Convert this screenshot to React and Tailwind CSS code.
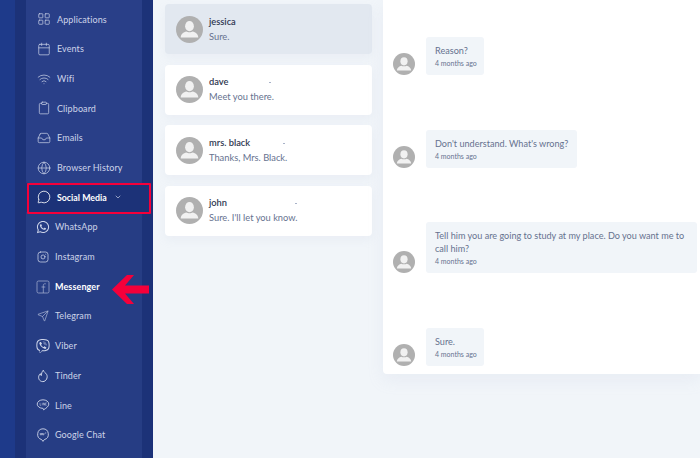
import { LayoutGrid, Calendar, Wifi, Clipboard, Inbox, Globe, MessageCircle, ChevronDown, Instagram, Send } from 'lucide-react';
import { FaWhatsapp, FaViber } from 'react-icons/fa';

function FbSquare() {
  return (
    <svg width="14" height="14" viewBox="0 0 14 14" fill="none" stroke="currentColor" strokeWidth="0.8" opacity="0.7">
      <rect x="1" y="1" width="12" height="12" rx="1.500" />
      <path d="M9.800 3.800h-1c-1 0-1.500.6-1.500 1.500V13M5.500 7h3.800" />
    </svg>
  );
}

function LineIcon() {
  return (
    <svg width="14" height="14" viewBox="0 0 14 14" fill="none" stroke="currentColor" strokeWidth="0.9">
      <path d="M7 1.800c3.200 0 5.800 1.900 5.800 4.300 0 2.300-2.900 4.400-5.300 5.700.2-.7.1-1.300-.5-1.400-3.200-.1-5.800-1.900-5.800-4.300C1.200 3.700 3.800 1.800 7 1.800z" />
      <path d="M4 4.800v2.500h1.200M6.300 4.800v2.500M7.600 7.300V4.800l1.200 2.500V4.800M10.600 4.800h-.9v2.500h.9" strokeWidth="0.5" />
    </svg>
  );
}

function GoogleChatIcon() {
  return (
    <svg width="14" height="14" viewBox="0 0 14 14" fill="none" stroke="currentColor" strokeWidth="0.9">
      <path d="M7 .8a5.500 5.500 0 0 1 1.300 10.800L7 13.400l-1.300-1.800A5.500 5.500 0 0 1 7 .8z" />
      <path d="M4.300 5v1.800h1.300V5M6.600 5v1.800h1.300V5M9 5h1.200" strokeWidth="0.7" />
    </svg>
  );
}

function TinderIcon() {
  return (
    <svg width="14" height="14" viewBox="0 0 14 14" fill="none" stroke="currentColor" strokeWidth="1">
      <path d="M7.300 1.200c.4 2 2.200 2.400 3.300 4.200 1.600 2.800-.3 7.200-3.800 7.200-3.400 0-5.200-3.600-3.600-6.500.3-.6.7-1 1.100-1.400.1 1 .4 1.600 1 1.900.2-2.100.6-3.900 2-5.400z" />
    </svg>
  );
}

function Avatar({ size }) {
  return (
    <svg width={size} height={size} viewBox="0 0 40 40" className="shrink-0">
      <circle cx="20" cy="20" r="20" fill="#b0b0b0" />
      <ellipse cx="20" cy="15" rx="6.500" ry="7.500" fill="#f1f1f1" />
      <path d="M7 32c0-5 4-8 8.500-9 1.500 1.500 7.500 1.500 9 0 4.500 1 8.500 4 8.500 9z" fill="#f1f1f1" />
    </svg>
  );
}

function NavItem({ icon, label, sub, active }) {
  return (
    <div className={`flex h-[29.7px] items-center ${sub ? 'gap-[5px] pl-[10px]' : 'gap-[6px] pl-[11px]'}`}>
      <span className="flex w-[14px] justify-center text-[#cfd6ea]">{icon}</span>
      <span className={`text-[9px] tracking-[0.1px] whitespace-nowrap ${active ? 'font-bold text-white' : 'text-[#cdd4e8]'}`}>{label}</span>
    </div>
  );
}

function ChatCard({ name, text, dot, selected }) {
  return (
    <div className={`flex h-[50px] items-center rounded-[4px] pl-[11px] shadow-[0_4px_10px_rgba(180,190,215,0.12)] ${selected ? 'bg-[#e2e8f0]' : 'bg-white'}`}>
      <Avatar size={27} />
      <div className="ml-[6px] flex flex-col gap-[3px]">
        <div className="relative text-[9.3px] leading-[12px] font-semibold text-[#2f3750]">
          {name}
          {dot && <span className={`absolute top-[6px] h-px w-[2px] bg-[#a8b2c8] ${dot}`} />}
        </div>
        <div className="text-[9.3px] leading-[12px] text-[#66728f]">{text}</div>
      </div>
    </div>
  );
}

function Message({ text, wide, mt }) {
  return (
    <div className={`flex items-end ${mt}`}>
      <Avatar size={22} />
      <div className={`ml-[11px] rounded-[3px] bg-[#f1f5f9] pt-[7px] pr-[9px] pb-[6px] pl-[9px] whitespace-nowrap ${wide}`}>
        <div className="text-[9.1px] leading-[13px] text-[#66728f]">{text}</div>
        <div className="mt-[1px] text-[7px] leading-[11px] text-[#66728f]">4 months ago</div>
      </div>
    </div>
  );
}

export default function App() {
  return (
    <div className="flex h-[458px] w-[700px] overflow-hidden bg-[#f1f5f9] font-['Lato',sans-serif]">
      <aside className="relative flex h-full w-[153px] shrink-0 border-r border-[#1b2f78] bg-[#1e3a8a]">
        <div className="w-[15px] shrink-0" />
        <div className="w-[11px] shrink-0 bg-[#1c3278]" />
        <nav className="w-[116px] shrink-0 bg-[#263d84]">
          <div className="rounded-b-[4px] bg-[#293f88] pt-[4.500px]">
            <NavItem icon={<LayoutGrid size={14} strokeWidth={1.2} />} label="Applications" />
            <NavItem icon={<Calendar size={14} strokeWidth={1.2} />} label="Events" />
            <NavItem icon={<Wifi size={14} strokeWidth={1.2} />} label="Wifi" />
            <NavItem icon={<Clipboard size={14} strokeWidth={1.2} />} label="Clipboard" />
            <NavItem icon={<Inbox size={14} strokeWidth={1.2} />} label="Emails" />
            <NavItem icon={<Globe size={14} strokeWidth={1.2} />} label="Browser History" />
          </div>
          <div className="flex h-[29.7px] items-center gap-[6px] bg-[#1c3278] pl-[11px]">
            <MessageCircle size={14} strokeWidth={1.4} className="text-white" />
            <span className="text-[8.8px] font-bold whitespace-nowrap text-white">Social Media</span>
            <ChevronDown size={8} className="ml-[1px] text-[#cfd6ea]" />
          </div>
          <NavItem sub icon={<FaWhatsapp size={14} />} label="WhatsApp" />
          <NavItem sub icon={<Instagram size={12} strokeWidth={1.5} />} label="Instagram" />
          <NavItem sub active icon={<FbSquare />} label="Messenger" />
          <NavItem sub icon={<Send size={12} strokeWidth={1.1} />} label="Telegram" />
          <NavItem sub icon={<FaViber size={14} />} label="Viber" />
          <NavItem sub icon={<TinderIcon />} label="Tinder" />
          <NavItem sub icon={<LineIcon />} label="Line" />
          <NavItem sub icon={<GoogleChatIcon />} label="Google Chat" />
        </nav>
        <div className="w-[10px] shrink-0 bg-[#1c3278]" />
        <div className="absolute top-[183px] left-[27px] h-[31px] w-[124px] rounded-[1px] border-[2px] border-[#f5003a]" />
        <svg className="absolute top-[275px] left-[112px]" width="37" height="29" viewBox="0 0 37 29">
          <path d="M0 14.500 15 0h7l-9 10.500h24v8H13l9 10.500h-7z" fill="#f5003a" />
        </svg>
      </aside>

      <section className="flex w-[230px] shrink-0 flex-col gap-[10.500px] pt-[4px] pr-[11px] pl-[12px]">
        <ChatCard selected name="jessica" text="Sure." />
        <ChatCard name="dave" text="Meet you there." dot="left-[60px]" />
        <ChatCard name="mrs. black" text="Thanks, Mrs. Black." dot="left-[74px]" />
        <ChatCard name="john" text="Sure. I'll let you know." dot="left-[86px]" />
      </section>

      <main className="h-[374px] flex-1 rounded-bl-[4px] bg-white pt-[37px] pl-[10px] shadow-[0_6px_16px_rgba(180,190,215,0.15)]">
        <Message text="Reason?" wide="w-[58px]" />
        <Message text="Don't understand. What's wrong?" wide="w-[151px]" mt="mt-[55px]" />
        <Message text={<>Tell him you are going to study at my place. Do you want me to<br />call him?</>} wide="w-[271px]" mt="mt-[54px]" />
        <Message text="Sure." wide="w-[58px]" mt="mt-[55px]" />
      </main>
    </div>
  );
}
